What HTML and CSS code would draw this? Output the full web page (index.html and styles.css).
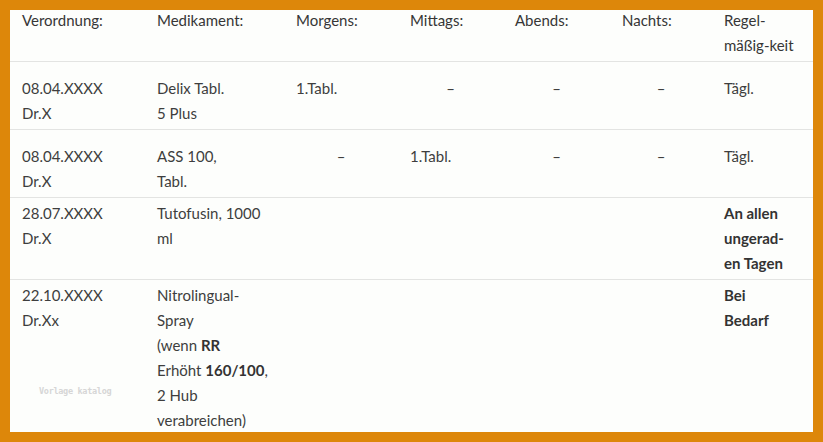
FILE: index.html
```html
<!DOCTYPE html>
<html lang="de">
<head>
<meta charset="utf-8">
<title>Medikamentenplan</title>
<link rel="stylesheet" href="styles.css">
</head>
<body>
<div class="frame">
  <table class="plan">
    <colgroup>
      <col class="c1"><col class="c2"><col class="c3"><col class="c4"><col class="c5"><col class="c6"><col class="c7">
    </colgroup>
    <thead>
      <tr>
        <th>Verordnung:</th>
        <th>Medikament:</th>
        <th>Morgens:</th>
        <th>Mittags:</th>
        <th>Abends:</th>
        <th>Nachts:</th>
        <th>Regel-<br>mäßig-keit</th>
      </tr>
    </thead>
    <tbody>
      <tr class="spaced">
        <td>08.04.XXXX<br>Dr.X</td>
        <td>Delix Tabl.<br>5 Plus</td>
        <td>1.Tabl.</td>
        <td class="dash">–</td>
        <td class="dash">–</td>
        <td class="dash">–</td>
        <td>Tägl.</td>
      </tr>
      <tr class="spaced">
        <td>08.04.XXXX<br>Dr.X</td>
        <td>ASS 100,<br>Tabl.</td>
        <td class="dash">–</td>
        <td>1.Tabl.</td>
        <td class="dash">–</td>
        <td class="dash">–</td>
        <td>Tägl.</td>
      </tr>
      <tr>
        <td>28.07.XXXX<br>Dr.X</td>
        <td>Tutofusin, 1000<br>ml</td>
        <td></td>
        <td></td>
        <td></td>
        <td></td>
        <td class="strong">An allen<br>ungerad-<br>en Tagen</td>
      </tr>
      <tr>
        <td class="wm-cell">22.10.XXXX<br>Dr.Xx<span class="watermark">Vorlage katalog</span></td>
        <td>Nitrolingual-<br>Spray<br>(wenn <b>RR</b><br>Erhöht <b>160/100</b>,<br>2 Hub<br>verabreichen)</td>
        <td></td>
        <td></td>
        <td></td>
        <td></td>
        <td class="strong">Bei<br>Bedarf</td>
      </tr>
    </tbody>
  </table>
</div>
</body>
</html>
```

FILE: styles.css
```css
html, body {
  margin: 0;
  padding: 0;
}

body {
  background: #dd870a;
  width: 823px;
  height: 442px;
  padding: 10px;
  box-sizing: border-box;
  font-family: "Lato", "Open Sans", sans-serif;
}

.frame {
  background: #fdfefc;
  height: 422px;
  overflow: hidden;
}

.plan {
  width: 803px;
  table-layout: fixed;
  border-collapse: collapse;
  margin-top: -5px;
  font-size: 15px;
  line-height: 25px;
  color: #3e3e3e;
}

.c1 { width: 135px; }
.c2 { width: 139px; }
.c3 { width: 114px; }
.c4 { width: 105px; }
.c5 { width: 107px; }
.c6 { width: 102px; }
.c7 { width: 101px; }

.plan th,
.plan td {
  padding: 3px 12px;
  text-align: left;
  vertical-align: top;
  white-space: nowrap;
  font-weight: 400;
}

.plan th {
  color: #363636;
}

.plan tbody tr {
  border-top: 1px solid #e3e4e2;
}

.plan tr.spaced td {
  padding-top: 14px;
}

.plan td.dash {
  text-align: center;
}

.plan b,
.plan td.strong {
  font-weight: 700;
  color: #333333;
}

.wm-cell {
  position: relative;
}

.watermark {
  position: absolute;
  left: 29px;
  top: 106px;
  font-family: "DejaVu Sans Mono", monospace;
  font-size: 8.5px;
  letter-spacing: -0.3px;
  line-height: 10px;
  font-weight: 700;
  color: #d6d6d6;
}
```
